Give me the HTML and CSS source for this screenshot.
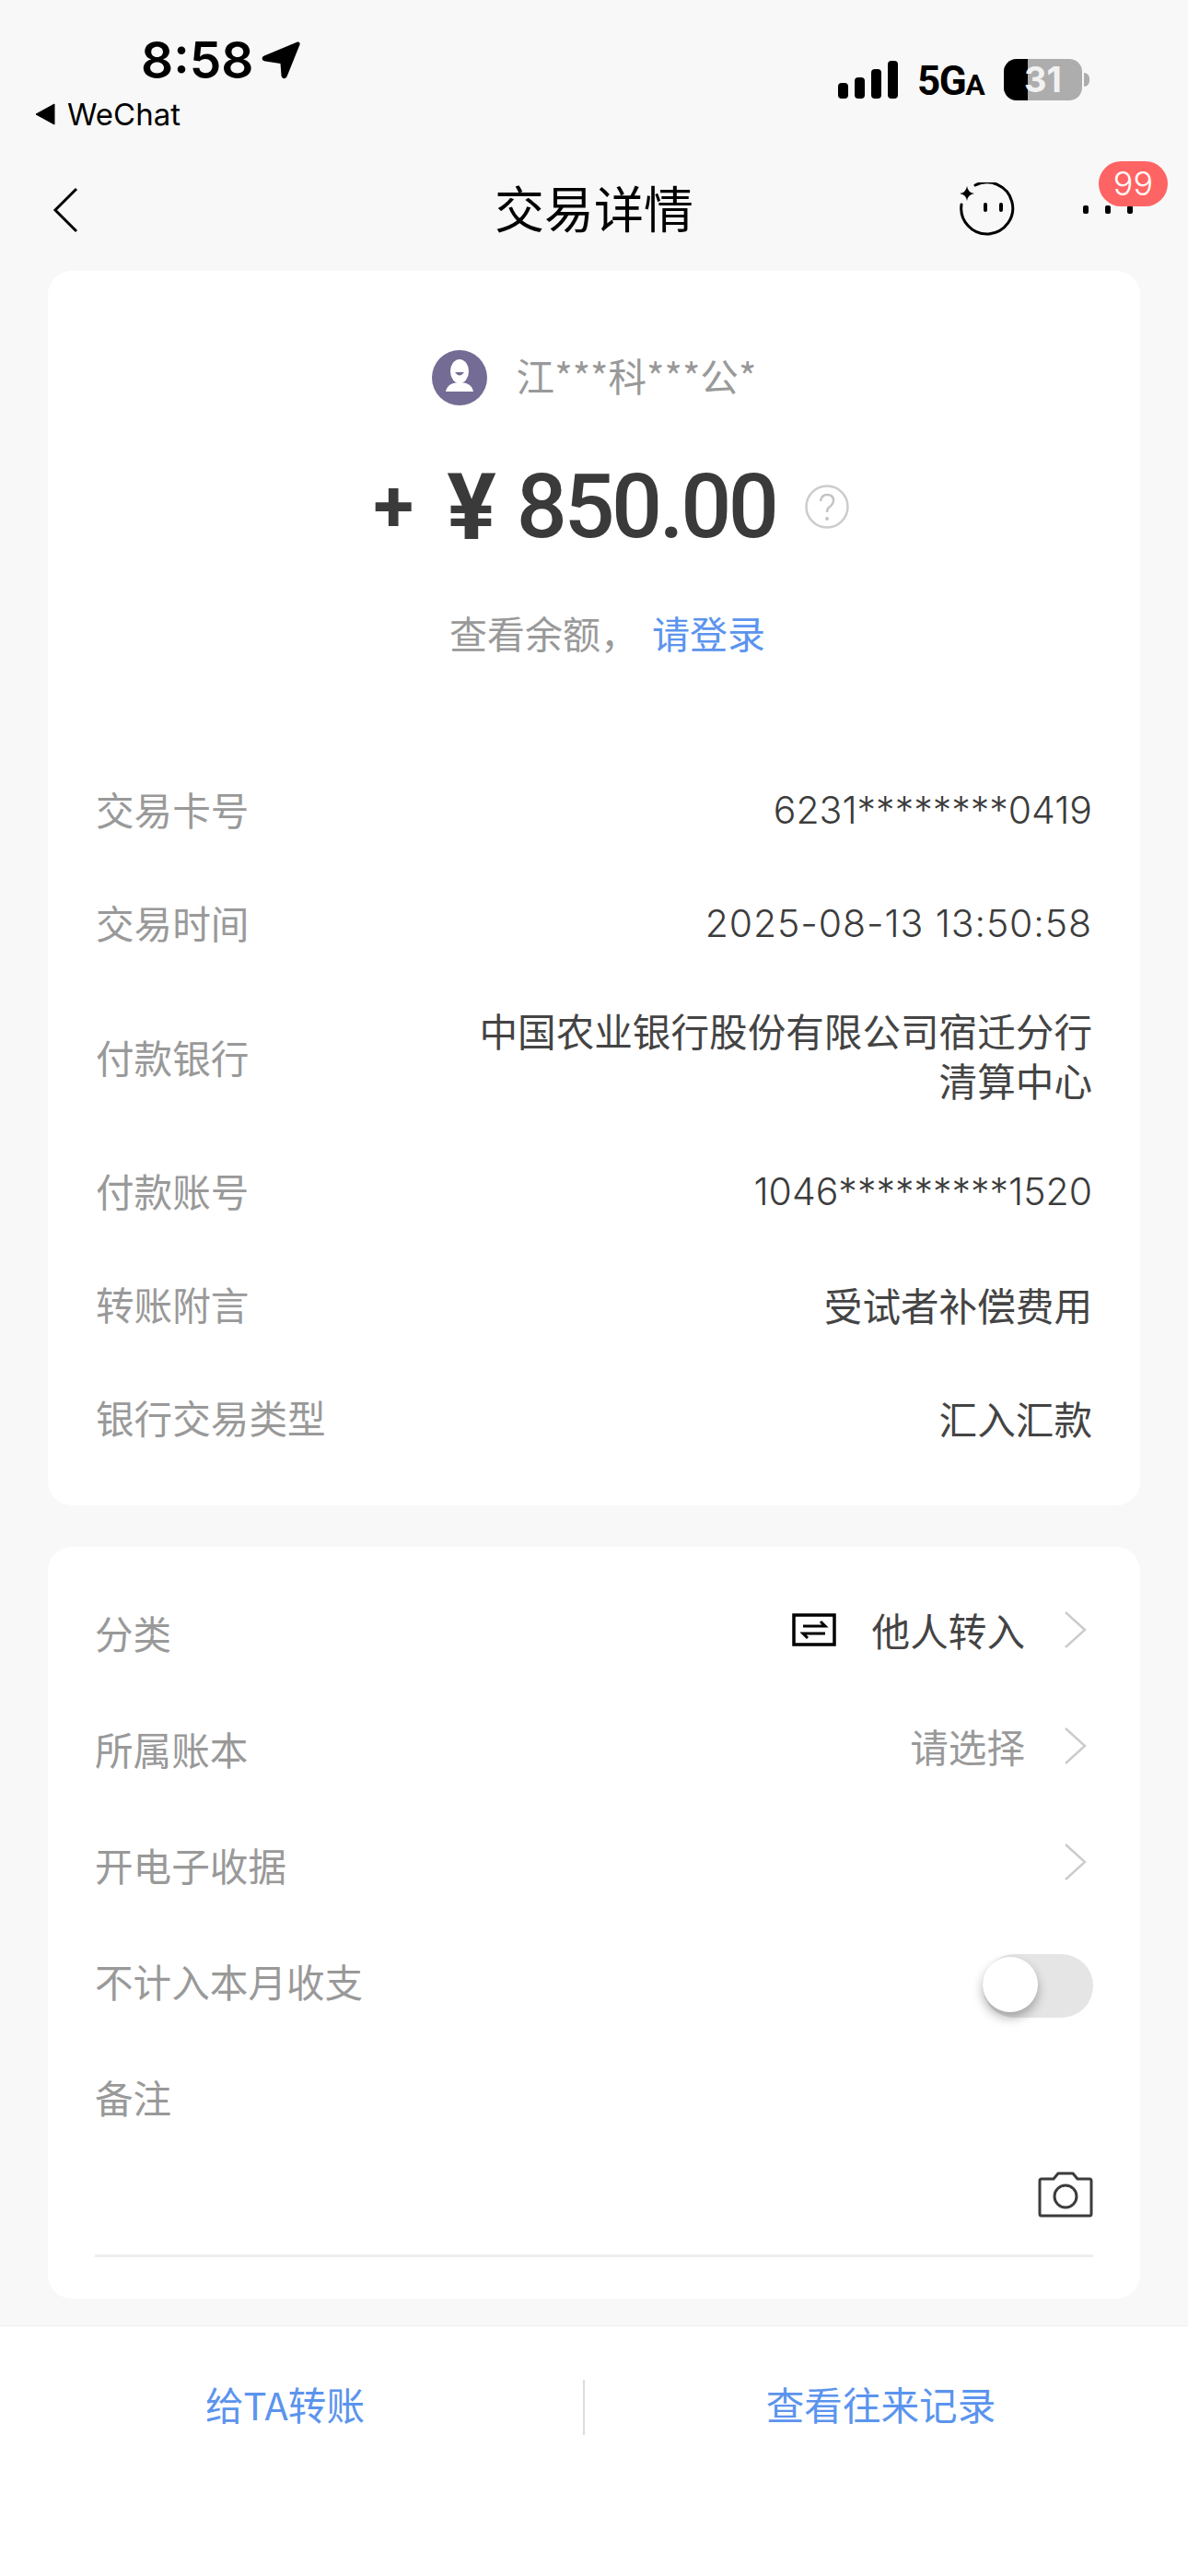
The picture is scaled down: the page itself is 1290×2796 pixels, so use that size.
FILE: index.html
```html
<!DOCTYPE html>
<html lang="zh-CN">
	<head>
		<meta charset="utf-8">
		<title>交易详情</title>
		<link rel="stylesheet" href="styles.css">
	</head>
	<body>

<div class="status">
	<div class="status-left">
		<div class="clock">
			<span>8:58</span>
			<svg class="arrow" width="42" height="42" viewBox="0 0 42 42"><path d="M39 1.500 C41 1 42 2.500 41.500 4.500 L28 38 C26.500 42.500 22 42 21.500 38 L20.500 25 L4 22.500 C0 22 -0.500 18 3 16.500 Z" fill="#000"/></svg>
		</div>
		<div class="back-app">
			<svg width="22" height="24" viewBox="0 0 22 24"><path d="M1 12 L21 1 L21 23 Z" fill="#000" stroke="#000" stroke-linejoin="round"/></svg>
			<span>WeChat</span>
		</div>
	</div>
	<div class="status-right">
		<div class="signal">
			<i class="bar1"></i><i class="bar2"></i><i class="bar3"></i><i class="bar4"></i>
		</div>
		<div class="net">5G<small>A</small></div>
		<div class="battery">
			<div class="battery-fill"></div>
			<span>31</span>
		</div>
		<div class="battery-nub"></div>
	</div>
</div>

<div class="nav">
	<svg class="nav-back" width="28" height="50" viewBox="0 0 28 50"><path d="M26 2 L3 25 L26 48" fill="none" stroke="#000" stroke-width="3"/></svg>
	<div class="nav-title">交易详情</div>
	<svg class="nav-face" width="60" height="60" viewBox="0 0 60 60">
		<path d="M17 3 A28 28 0 1 1 2 24" fill="none" stroke="#000" stroke-width="3" stroke-linecap="round"/>
		<path d="M8 4 Q9 11 16 12 Q9 13 8 20 Q7 13 0 12 Q7 11 8 4 Z" fill="#000"/>
		<rect x="26" y="22" width="4" height="10" rx="2" fill="#000"/>
		<rect x="43" y="22" width="4" height="10" rx="2" fill="#000"/>
	</svg>
	<div class="nav-more">
		<i></i><i></i><i></i>
		<span class="badge">99</span>
	</div>
</div>

<div class="card card-detail">
	<div class="payee">
		<svg width="60" height="60" viewBox="0 0 60 60">
			<circle cx="30" cy="30" r="30" fill="#746c94"/>
			<ellipse cx="30" cy="23" rx="10" ry="13" fill="#fff"/>
			<path d="M25 24 Q30 31 35 24 Z" fill="#746c94"/>
			<path d="M15 45 Q17 35 30 35 Q43 35 45 45 Z" fill="#fff"/>
		</svg>
		<span>江***科***公*</span>
	</div>
	<div class="amount">
		<span class="plus">+</span>
		<span class="yen">¥</span>
		<span class="num">850.00</span>
		<svg class="help" width="48" height="48" viewBox="0 0 48 48">
			<circle cx="24" cy="24" r="22.500" fill="none" stroke="#ccc" stroke-width="2.500"/>
			<path d="M17 18 Q18 11 24 11 Q31 11 31 17 Q31 21 27 24 Q24 26 24 30" fill="none" stroke="#c4c4c4" stroke-width="2.500"/>
			<circle cx="24" cy="37" r="2" fill="#c4c4c4"/>
		</svg>
	</div>
	<div class="balance">查看余额，<a>请登录</a></div>

	<div class="rows">
		<div class="row"><div class="label">交易卡号</div><div class="value value-num">6231********0419</div></div>
		<div class="row"><div class="label">交易时间</div><div class="value value-num value-date">2025-08-13 13:50:58</div></div>
		<div class="row">
			<div class="label">付款银行</div>
			<div class="value value-long">
				<div>中国农业银行股份有限公司宿迁分行</div>
				<div>清算中心</div>
			</div>
		</div>
		<div class="row"><div class="label">付款账号</div><div class="value value-num">1046*********1520</div></div>
		<div class="row"><div class="label">转账附言</div><div class="value">受试者补偿费用</div></div>
		<div class="row"><div class="label">银行交易类型</div><div class="value">汇入汇款</div></div>
	</div>
</div>

<div class="card card-extra">
	<div class="opt">
		<div class="label">分类</div>
		<div class="opt-right">
			<svg class="cat-icon" width="48" height="36" viewBox="0 0 48 36">
				<rect x="2" y="2" width="44" height="32" fill="none" stroke="#000" stroke-width="3.500"/>
				<path d="M12 14 H36 L31 9" fill="none" stroke="#000" stroke-width="3"/>
				<path d="M36 22 H12 L17 27" fill="none" stroke="#000" stroke-width="3"/>
			</svg>
			<span class="value">他人转入</span>
			<svg class="chev" width="24" height="40" viewBox="0 0 24 40"><path d="M1 1 L22 20 L1 39" fill="none" stroke="#ccc" stroke-width="2.500"/></svg>
		</div>
	</div>
	<div class="opt">
		<div class="label">所属账本</div>
		<div class="opt-right">
			<span class="hint">请选择</span>
			<svg class="chev" width="24" height="40" viewBox="0 0 24 40"><path d="M1 1 L22 20 L1 39" fill="none" stroke="#ccc" stroke-width="2.500"/></svg>
		</div>
	</div>
	<div class="opt">
		<div class="label">开电子收据</div>
		<div class="opt-right">
			<svg class="chev" width="24" height="40" viewBox="0 0 24 40"><path d="M1 1 L22 20 L1 39" fill="none" stroke="#ccc" stroke-width="2.500"/></svg>
		</div>
	</div>
	<div class="opt">
		<div class="label">不计入本月收支</div>
		<div class="toggle"><div class="knob"></div></div>
	</div>
	<div class="opt">
		<div class="label">备注</div>
	</div>
	<div class="note">
		<svg width="60" height="50" viewBox="0 0 60 50">
			<path d="M4 8 H17 L22 2 H38 L43 8 H56 Q58 8 58 10 V46 Q58 48 56 48 H4 Q2 48 2 46 V10 Q2 8 4 8 Z" fill="none" stroke="#3c3c3c" stroke-width="3" stroke-linejoin="round"/>
			<circle cx="30" cy="27" r="12" fill="none" stroke="#3c3c3c" stroke-width="3"/>
		</svg>
	</div>
</div>

<div class="footer">
	<div class="foot-btn foot-left">给TA转账</div>
	<div class="foot-line"></div>
	<div class="foot-btn foot-right">查看往来记录</div>
</div>

	</body>
</html>
```
FILE: styles.css
```css
* { box-sizing: border-box; }

html, body {
	margin: 0;
	height: 2796px;
}

body {
	display: flex;
	flex-direction: column;
	overflow: hidden;
	background: #f8f8f8;
	color: #3c3c3c;
	font-family: "Noto Sans CJK SC", Roboto, sans-serif;
	font-size: 41.600px;
}

/* status bar */
.status {
	display: flex;
	justify-content: space-between;
	height: 161px;
	font-family: Inter, Roboto, sans-serif;
	color: #000;
}

.status-left { padding: 31px 0 0 38px; }

.clock {
	display: flex;
	align-items: center;
	padding-left: 115px;
	height: 68px;
	font-size: 55px;
	font-weight: 600;
	line-height: 68px;
}

.clock .arrow { margin-left: 8px; }

.back-app {
	display: flex;
	align-items: center;
	gap: 13px;
	margin-top: 5px;
	height: 40px;
	font-size: 33px;
	line-height: 40px;
}

.status-right {
	display: flex;
	align-items: flex-start;
	padding: 64px 107px 0 0;
}

.signal {
	display: flex;
	align-items: flex-end;
	gap: 7px;
	height: 41px;
	margin: 2px 21px 0 0;
}

.signal i {
	width: 11px;
	background: #000;
	border-radius: 4px;
}

.bar1 { height: 17px; }
.bar2 { height: 23px; }
.bar3 { height: 32px; }
.bar4 { height: 41px; }

.net {
	width: 94px;
	font-family: Roboto, sans-serif;
	font-weight: 700;
	font-size: 44px;
	line-height: 48px;
	letter-spacing: -1.500px;
}

.net small { font-size: 32px; }

.battery {
	position: relative;
	width: 85px;
	height: 45px;
	border-radius: 14px;
	background: #adadad;
	overflow: hidden;
	text-align: center;
	font-family: Inter, Roboto, sans-serif;
	font-weight: 700;
	font-size: 38px;
	line-height: 45px;
	color: #f2f2f2;
}

.battery-fill {
	position: absolute;
	left: 0;
	top: 0;
	width: 26px;
	height: 45px;
	background: #000;
}

.battery span { position: relative; }

.battery-nub {
	width: 6px;
	height: 15px;
	margin: 15px 0 0 2px;
	background: #adadad;
	border-radius: 0 6px 6px 0;
}

/* nav */
.nav {
	position: relative;
	display: flex;
	align-items: center;
	height: 133px;
	padding: 0 60px 0 57px;
}

.nav-title {
	flex: 1;
	text-align: center;
	font-size: 54px;
	line-height: 60px;
	margin-bottom: 5px;
	color: #000;
	padding-left: 163px;
}

.nav-face { margin-right: 74px; }

.nav-more {
	position: relative;
	display: flex;
	gap: 18px;
	width: 54px;
}

.nav-more i {
	width: 6px;
	height: 9px;
	background: #000;
	border-radius: 2px;
}

.badge {
	position: absolute;
	left: 17px;
	top: -48px;
	width: 75px;
	height: 49px;
	background: #ff6464;
	border-radius: 25px;
	text-align: center;
	font-family: Inter, Roboto, sans-serif;
	font-size: 36px;
	font-weight: 300;
	line-height: 48px;
	color: #fff;
}

/* cards */
.card {
	margin: 0 52px;
	background: #fff;
	border-radius: 26px;
}

.card-detail {
	height: 1340px;
	padding: 0 52px;
}

.card-extra {
	height: 816px;
	margin-top: 45px;
	padding: 0 51px;
}

.payee {
	display: flex;
	align-items: center;
	justify-content: center;
	gap: 32px;
	padding: 86px 0 0;
	height: 146px;
	line-height: 50px;
	color: #999;
}

.payee span { margin-top: -6px; }

.amount {
	display: flex;
	align-items: center;
	justify-content: center;
	height: 112px;
	margin-top: 54px;
	padding-left: 38px;
	font-family: Roboto, sans-serif;
	font-weight: 500;
	color: #3a3a3a;
}

.plus { font-size: 80px; margin-right: 36px; font-weight: 700; }
.yen { font-size: 100px; margin-right: 22px; font-weight: 700; }
.num { font-size: 97px; letter-spacing: -3.500px; }
.help { margin-left: 32px; }

.balance {
	margin-top: 49px;
	text-align: center;
	height: 62px;
	font-size: 41px;
	line-height: 62px;
	color: #999;
	padding-left: 29px;
}

.balance a { color: #5b94ee; margin-left: 15px; }

.rows { margin-top: 101px; }

.row {
	display: flex;
	align-items: center;
	justify-content: space-between;
	padding: 30px 0;
}

.label {
	color: #999;
	line-height: 63px;
}

.row .label { margin-top: -2px; }

.value {
	color: #444;
	line-height: 63px;
	text-align: right;
}

.value-num {
	font-family: Inter, sans-serif;
	font-weight: 300;
	font-size: 41px;
	color: #3c3c3c;
}

.value-date { letter-spacing: .900px; }

.value-long {
	font-family: Inter, "Noto Sans CJK SC", sans-serif;
	line-height: 54px;
}

.opt {
	display: flex;
	align-items: center;
	justify-content: space-between;
	height: 126px;
}

.opt .label { margin-top: -4px; }

.opt:first-child { margin-top: 32px; }

.opt-right {
	display: flex;
	align-items: center;
	margin-top: -10px;
}

.hint { color: #999; }

.cat-icon { margin-right: 39px; }
.chev { margin-left: 43px; margin-right: 7px; }

.toggle {
	position: relative;
	width: 120px;
	height: 69px;
	margin-top: 6px;
	background: #e5e5e5;
	border-radius: 35px;
}

.knob {
	position: absolute;
	left: 0;
	top: 3px;
	width: 60px;
	height: 60px;
	border-radius: 50%;
	background: #fff;
	box-shadow: 0 6px 12px rgba(0, 0, 0, .3);
}

.note {
	display: flex;
	justify-content: flex-end;
	align-items: flex-end;
	height: 109px;
	padding: 0 0 40px;
	border-bottom: 3px solid #eee;
}

/* bottom bar */
.footer {
	display: flex;
	align-items: flex-start;
	margin-top: auto;
	height: 272px;
	padding-top: 58px;
	background: #fff;
	border-top: 1px solid #eee;
}

.foot-btn {
	text-align: center;
	color: #5b94ee;
	height: 60px;
	line-height: 52px;
}

.foot-left { width: 633px; padding-right: 14px; }
.foot-right { flex: 1; padding-right: 12px; }

.foot-line {
	width: 2px;
	height: 60px;
	background: #ddd;
}
```
